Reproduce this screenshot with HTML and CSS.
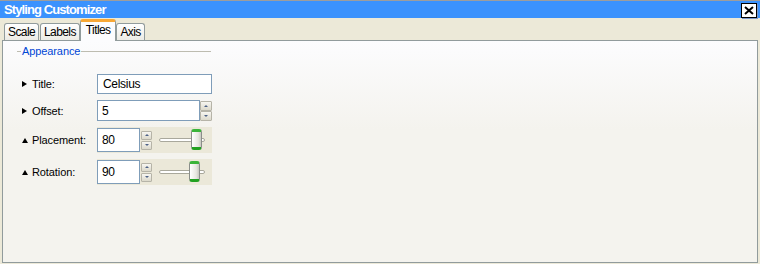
FILE: index.html
```html
<!DOCTYPE html>
<html lang="en">
<head>
    <meta charset="UTF-8">
    <title>Styling Customizer</title>
    <link rel="stylesheet" href="styles.css">
</head>
<body>
    <div class="window">
        <div class="titlebar">
            <span class="title">Styling Customizer</span>
            <span class="close">
                <svg width="10" height="9" viewBox="0 0 10 9"><path d="M1 1 L9 8 M9 1 L1 8" stroke="#000" stroke-width="2" fill="none"/></svg>
            </span>
        </div>
        <div class="tabs">
            <div class="tab">Scale</div>
            <div class="tab">Labels</div>
            <div class="tab active">Titles</div>
            <div class="tab">Axis</div>
        </div>
        <div class="panel">
            <div class="legend">
                <span class="legend-line short"></span>
                <span class="legend-text">Appearance</span>
                <span class="legend-line"></span>
            </div>
            <div class="rows">
                <div class="row r-text">
                    <span class="lbl"><span class="arrow right"></span>Title:</span>
                    <div class="textbox wide">Celsius</div>
                </div>
                <div class="row r-spin">
                    <span class="lbl"><span class="arrow right"></span>Offset:</span>
                    <div class="textbox medium">5</div>
                    <div class="spinner tall">
                        <span class="spin-btn"><span class="tri up"></span></span>
                        <span class="spin-btn"><span class="tri down"></span></span>
                    </div>
                </div>
                <div class="row r-slide">
                    <span class="lbl"><span class="arrow up"></span>Placement:</span>
                    <div class="field-box">
                        <div class="textbox narrow">80</div>
                        <div class="spinner">
                            <span class="spin-btn"><span class="tri up"></span></span>
                            <span class="spin-btn"><span class="tri down"></span></span>
                        </div>
                        <div class="slider">
                            <div class="track"></div>
                            <div class="thumb" style="left: 32px;"></div>
                        </div>
                    </div>
                </div>
                <div class="row r-slide">
                    <span class="lbl"><span class="arrow up"></span>Rotation:</span>
                    <div class="field-box">
                        <div class="textbox narrow">90</div>
                        <div class="spinner">
                            <span class="spin-btn"><span class="tri up"></span></span>
                            <span class="spin-btn"><span class="tri down"></span></span>
                        </div>
                        <div class="slider">
                            <div class="track"></div>
                            <div class="thumb" style="left: 30px;"></div>
                        </div>
                    </div>
                </div>
            </div>
        </div>
    </div>
</body>
</html>
```

FILE: styles.css
```css
body {
    margin: 0;
    font-family: 'Liberation Sans', Arial, sans-serif;
    font-size: 11px;
    color: #000000;
}
.window {
    width: 760px;
    height: 264px;
    background-color: #ece9d8; /* XP dialog beige */
    display: flex;
    flex-direction: column;
    overflow: hidden;
}
.titlebar {
    height: 18px;
    box-sizing: border-box;
    border-top: 1px solid #9d9d9d;
    background-color: #3b92fd;
    display: flex;
    align-items: center;
    justify-content: space-between;
    padding: 0 3px 0 4px;
}
.title {
    color: #ffffff;
    font-weight: bold;
    font-size: 13px;
    letter-spacing: -0.9px;
}
.close {
    width: 16px;
    height: 15px;
    box-sizing: border-box;
    border: 1px solid #000000;
    background-color: #ffffff;
    box-shadow: 1px 1px 0 #7a96c8;
    display: flex;
    align-items: center;
    justify-content: center;
    margin-top: 1px;
}
.tabs {
    height: 22px;
    display: flex;
    align-items: flex-end;
    padding-left: 4px;
    position: relative;
    z-index: 1;
}
.tab {
    height: 17px;
    box-sizing: border-box;
    padding: 0 3px;
    margin-right: 1px;
    border: 1px solid #919b9c;
    border-bottom: none;
    border-radius: 3px 3px 0 0;
    background: linear-gradient(#ffffff, #ecebe5);
    letter-spacing: -0.6px;
    display: flex;
    align-items: center;
    font-size: 12px;
}
.tab.active {
    height: 22px;
    margin: 0 0 -1px -1px;
    padding: 0 5px 3px;
    background: #fcfcfe;
    border-top: 3px solid #f8a836;
    border-radius: 3px 3px 0 0;
}
.panel {
    height: 223px;
    box-sizing: border-box;
    margin: 0 2px;
    border: 1px solid #919b9c;
    background: linear-gradient(#fcfcfe, #f4f3ee 40%);
    padding: 4px 0 0 14px;
}
.legend {
    width: 194px;
    height: 12px;
    display: flex;
    align-items: center;
}
.legend-line {
    flex: 1;
    height: 1px;
    background-color: #bdbcb0;
}
.legend-line.short {
    flex: 0 0 4px;
}
.legend-text {
    color: #0046d5;
    padding: 0 1px;
    letter-spacing: -0.1px;
    font-size: 11px;
}
.rows {
    margin-top: 17px;
    padding-left: 5px;
    display: flex;
    flex-direction: column;
    gap: 6px;
}
.row {
    display: flex;
    align-items: center;
}
.r-text { height: 20px; }
.r-spin { height: 21px; }
.r-slide { height: 26px; }
.lbl {
    width: 75px;
    display: flex;
    align-items: center;
    letter-spacing: -0.1px;
    font-size: 11px;
}
.arrow {
    width: 0;
    height: 0;
    margin-right: 5px;
}
.arrow.right {
    border-top: 3px solid transparent;
    border-bottom: 3px solid transparent;
    border-left: 5px solid #000000;
}
.arrow.up {
    border-left: 3px solid transparent;
    border-right: 3px solid transparent;
    border-bottom: 5px solid #000000;
    margin-right: 4px;
}
.textbox {
    height: 100%;
    box-sizing: border-box;
    border: 1px solid #7f9db9;
    background-color: #ffffff;
    padding-left: 5px;
    display: flex;
    align-items: center;
    font-size: 12px;
    letter-spacing: -0.3px;
}
.textbox.wide { width: 115px; }
.textbox.medium { width: 103px; padding-left: 4px; }
.textbox.narrow { width: 43px; height: 24px; padding-left: 4px; }
.field-box {
    width: 115px;
    height: 26px;
    box-sizing: border-box;
    padding: 1px 0;
    background-color: #ebe8d9;
    display: flex;
    align-items: center;
}
.spinner {
    width: 11px;
    display: flex;
    flex-direction: column;
    gap: 1px;
    margin-left: 1px;
}
.spinner.tall {
    width: 12px;
    margin-left: 0;
    gap: 0;
}
.spin-btn {
    height: 9px;
    box-sizing: border-box;
    border: 1px solid #b6b4a8;
    border-radius: 1px;
    background: linear-gradient(#f7f6f1, #dcd9cb);
    display: flex;
    align-items: center;
    justify-content: center;
}
.spinner.tall .spin-btn {
    height: 10px;
}
.tri {
    width: 0;
    height: 0;
    border-left: 2px solid transparent;
    border-right: 2px solid transparent;
}
.tri.up { border-bottom: 2px solid #4d6185; }
.tri.down { border-top: 2px solid #4d6185; }
.slider {
    position: relative;
    width: 46px;
    height: 24px;
    margin-left: 7px;
    display: flex;
    align-items: center;
}
.track {
    width: 100%;
    height: 4px;
    box-sizing: border-box;
    border: 1px solid #a9a89c;
    border-radius: 2px;
    background-color: #ffffff;
}
.thumb {
    position: absolute;
    top: 1px;
    width: 11px;
    height: 21px;
    box-sizing: border-box;
    border: 1px solid #8a8d8a;
    border-top: 3px solid #3ab43a;
    border-bottom: 3px solid #21a121;
    border-radius: 3px;
    background: linear-gradient(90deg, #ffffff, #e6e6e0 70%, #c8c8c0);
}
```
